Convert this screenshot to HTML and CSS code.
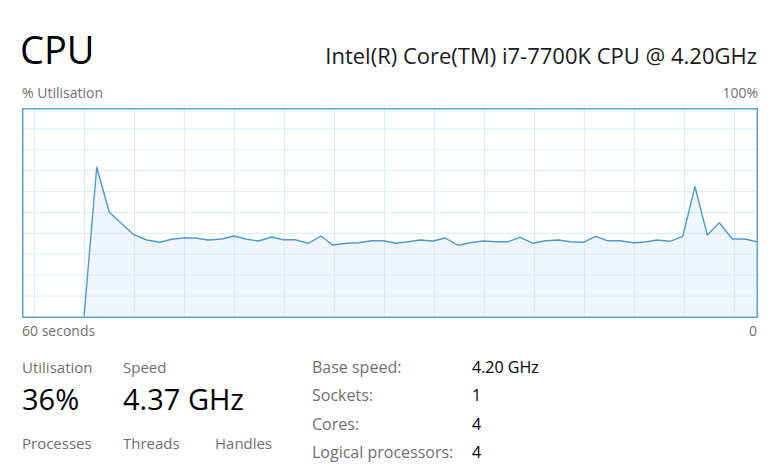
FILE: index.html
```html
<!DOCTYPE html>
<html>
<head>
<meta charset="utf-8">
<link rel="stylesheet" href="styles.css">
</head>
<body>
<div class="page">
  <header class="head">
    <h1 class="title">CPU</h1>
    <div class="model">Intel(R) Core(TM) i7-7700K CPU @ 4.20GHz</div>
  </header>
  <div class="axis axis-top">
    <span>% Utilisation</span>
    <span>100%</span>
  </div>
  <div class="graph">
    <svg class="chart" width="736" height="210" viewBox="0 0 736 210">
      <g class="grid">
        <line x1="0" y1="20.9" x2="736" y2="20.9"/>
        <line x1="0" y1="41.8" x2="736" y2="41.8"/>
        <line x1="0" y1="62.7" x2="736" y2="62.7"/>
        <line x1="0" y1="83.6" x2="736" y2="83.6"/>
        <line x1="0" y1="104.5" x2="736" y2="104.5"/>
        <line x1="0" y1="125.4" x2="736" y2="125.4"/>
        <line x1="0" y1="146.3" x2="736" y2="146.3"/>
        <line x1="0" y1="167.2" x2="736" y2="167.2"/>
        <line x1="0" y1="188.1" x2="736" y2="188.1"/>
        <line x1="12.5" y1="0" x2="12.5" y2="210"/>
        <line x1="62.5" y1="0" x2="62.5" y2="210"/>
        <line x1="112.5" y1="0" x2="112.5" y2="210"/>
        <line x1="162.5" y1="0" x2="162.5" y2="210"/>
        <line x1="212.5" y1="0" x2="212.5" y2="210"/>
        <line x1="262.5" y1="0" x2="262.5" y2="210"/>
        <line x1="312.5" y1="0" x2="312.5" y2="210"/>
        <line x1="362.5" y1="0" x2="362.5" y2="210"/>
        <line x1="412.5" y1="0" x2="412.5" y2="210"/>
        <line x1="462.5" y1="0" x2="462.5" y2="210"/>
        <line x1="512.5" y1="0" x2="512.5" y2="210"/>
        <line x1="562.5" y1="0" x2="562.5" y2="210"/>
        <line x1="612.5" y1="0" x2="612.5" y2="210"/>
        <line x1="662.5" y1="0" x2="662.5" y2="210"/>
        <line x1="712.5" y1="0" x2="712.5" y2="210"/>
      </g>
      <g transform="translate(-22,-108)">
        <polygon class="area" points="84,317 96.7,167.3 109.3,212.3 121,223 133.3,234.3 146.7,240 160,242.3 171.7,239.3 185,237.7 196.7,238.3 208,240 221.7,239 234,236 246.7,239.3 258.3,241 271.7,237 283.3,239.7 295,239.7 308.3,243.3 321,236 332.7,245 346.7,243.3 358.3,242.7 371.7,240.7 383.3,240.7 396,243.3 408.3,241.7 420,240 433.3,241 445,238 458.3,245.3 470,242.7 483.3,241 496.7,241.7 508.3,241.7 520,237.3 533.3,243.3 545,240.7 558.3,240 570,241.7 583.3,242.3 595.7,236.3 607.3,240.7 620,240.7 633.3,242.7 645,242 657.3,240 670,241.3 682.7,236.3 695,186.7 707.3,235 719.3,222.7 732.3,239 745,239 757,241.7 757,317"/>
        <polyline class="line" points="84,317 96.7,167.3 109.3,212.3 121,223 133.3,234.3 146.7,240 160,242.3 171.7,239.3 185,237.7 196.7,238.3 208,240 221.7,239 234,236 246.7,239.3 258.3,241 271.7,237 283.3,239.7 295,239.7 308.3,243.3 321,236 332.7,245 346.7,243.3 358.3,242.7 371.7,240.7 383.3,240.7 396,243.3 408.3,241.7 420,240 433.3,241 445,238 458.3,245.3 470,242.7 483.3,241 496.7,241.7 508.3,241.7 520,237.3 533.3,243.3 545,240.7 558.3,240 570,241.7 583.3,242.3 595.7,236.3 607.3,240.7 620,240.7 633.3,242.7 645,242 657.3,240 670,241.3 682.7,236.3 695,186.7 707.3,235 719.3,222.7 732.3,239 745,239 757,241.7"/>
      </g>
      <rect class="frame" x="0.75" y="0.75" width="734.5" height="208.5"/>
    </svg>
  </div>
  <div class="axis axis-bottom">
    <span>60 seconds</span>
    <span>0</span>
  </div>
  <section class="stats">
    <div class="live">
      <div class="label">Utilisation</div>
      <div class="label">Speed</div>
      <div></div>
      <div class="big">36%</div>
      <div class="big">4.37 GHz</div>
      <div></div>
      <div class="label lower">Processes</div>
      <div class="label lower">Threads</div>
      <div class="label lower">Handles</div>
    </div>
    <dl class="specs">
      <dt>Base speed:</dt><dd>4.20 GHz</dd>
      <dt>Sockets:</dt><dd>1</dd>
      <dt>Cores:</dt><dd>4</dd>
      <dt>Logical processors:</dt><dd>4</dd>
    </dl>
  </section>
</div>
</body>
</html>
```
FILE: styles.css
```css
html, body {
  margin: 0;
  padding: 0;
  background: #ffffff;
  overflow: hidden;
}
body {
  font-family: "Open Sans", "Noto Sans", "Liberation Sans", sans-serif;
  color: #000000;
}
.page {
  width: 736px;
  padding: 27px 0 0 22px;
}
.head {
  display: flex;
  justify-content: space-between;
  align-items: baseline;
  height: 44px;
}
.title {
  margin: 0 0 0 -2px;
  font-size: 38px;
  line-height: 44px;
  font-weight: 400;
  color: #000;
}
.model {
  font-size: 22px;
  line-height: 26px;
  color: #1a1a1a;
  margin-right: 1px;
}
.axis {
  display: flex;
  justify-content: space-between;
  font-size: 14px;
  line-height: 20px;
  color: #707070;
}
.axis-top {
  margin-top: 12px;
  margin-bottom: 5px;
}
.axis-bottom {
  margin-top: 3px;
  padding-right: 1px;
}
.graph {
  height: 210px;
}
.chart {
  display: block;
}
.grid line {
  stroke: #dcebf5;
  stroke-width: 1;
}
.area {
  fill: rgba(220, 232, 244, 0.45);
  stroke: none;
}
.line {
  fill: none;
  stroke: #4b9bd2;
  stroke-width: 1.4;
  stroke-linejoin: round;
}
.frame {
  fill: none;
  stroke: #5ba3d6;
  stroke-width: 1.5;
}
.stats {
  display: flex;
  align-items: flex-start;
  margin-top: 12px;
}
.live {
  width: 290px;
  padding-top: 4px;
  display: grid;
  grid-template-columns: 101px 92px auto;
  white-space: nowrap;
}
.label {
  font-size: 15px;
  line-height: 20px;
  color: #707070;
}
.big {
  font-size: 29px;
  line-height: 40px;
  margin-top: 2px;
  color: #000;
}
.lower {
  margin-top: 14px;
}
.specs {
  margin: 0;
  display: grid;
  grid-template-columns: 160px auto;
  font-size: 16px;
  line-height: 28.3px;
  white-space: nowrap;
}
.specs dt {
  color: #707070;
}
.specs dd {
  margin: 0;
  color: #000;
}
```
